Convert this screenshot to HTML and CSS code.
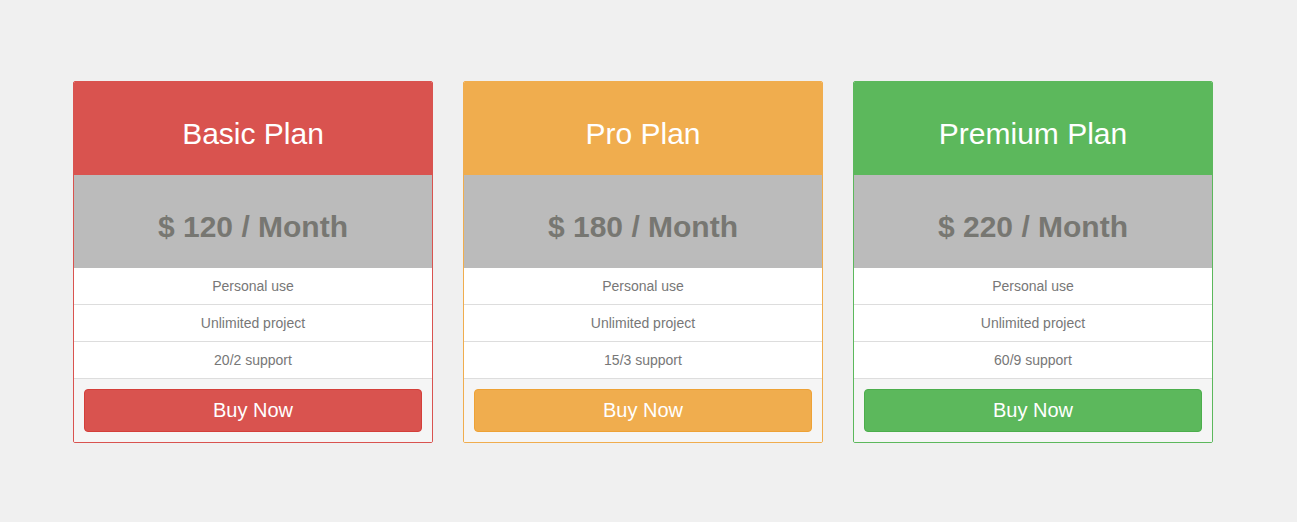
FILE: index.html
```html
<!DOCTYPE html>
<html lang="en">
<head>
<meta charset="utf-8">
<title>Pricing</title>
<link rel="stylesheet" href="styles.css">
</head>
<body>
<div class="pricing">
  <div class="plan plan-red">
    <div class="plan-head"><h2>Basic Plan</h2></div>
    <div class="plan-price"><h2>$ 120 / Month</h2></div>
    <ul class="plan-list">
      <li>Personal use</li>
      <li>Unlimited project</li>
      <li>20/2 support</li>
    </ul>
    <div class="plan-foot"><button class="btn">Buy Now</button></div>
  </div>
  <div class="plan plan-orange">
    <div class="plan-head"><h2>Pro Plan</h2></div>
    <div class="plan-price"><h2>$ 180 / Month</h2></div>
    <ul class="plan-list">
      <li>Personal use</li>
      <li>Unlimited project</li>
      <li>15/3 support</li>
    </ul>
    <div class="plan-foot"><button class="btn">Buy Now</button></div>
  </div>
  <div class="plan plan-green">
    <div class="plan-head"><h2>Premium Plan</h2></div>
    <div class="plan-price"><h2>$ 220 / Month</h2></div>
    <ul class="plan-list">
      <li>Personal use</li>
      <li>Unlimited project</li>
      <li>60/9 support</li>
    </ul>
    <div class="plan-foot"><button class="btn">Buy Now</button></div>
  </div>
</div>
</body>
</html>
```
FILE: styles.css
```css
* { box-sizing: border-box; }
html, body { margin: 0; padding: 0; }
body {
  background: #f0f0f0;
  font-family: "Liberation Sans", Arial, Helvetica, sans-serif;
  font-size: 14px;
  line-height: 20px;
  color: #333;
}
.pricing {
  display: flex;
  gap: 30px;
  padding: 81px 0 0 73px;
}
.plan {
  width: 360px;
  border: 1px solid #d9534f;
  border-radius: 2px;
  background: #fff;
  overflow: hidden;
}
.plan h2 {
  margin: 0;
  font-size: 30px;
  line-height: 33px;
  text-align: center;
}
.plan-head {
  padding: 35px 15px 25px;
  color: #fff;
}
.plan-head h2 { font-weight: normal; }
.plan-price {
  background: #bbbbbb;
  padding: 35px 15px 25px;
  color: #777772;
}
.plan-price h2 { font-weight: bold; }
.plan-list {
  list-style: none;
  margin: 0;
  padding: 0;
}
.plan-list li {
  padding: 8px 15px;
  border-bottom: 1px solid #ddd;
  text-align: center;
  color: #777;
}
.plan-foot {
  background: #f5f5f5;
  padding: 10px;
}
.btn {
  display: block;
  width: 100%;
  height: 43px;
  padding: 8px 16px;
  font-family: inherit;
  font-size: 20px;
  line-height: 25px;
  color: #fff;
  border: 1px solid;
  border-radius: 4px;
  cursor: pointer;
}
.plan-red { border-color: #d9534f; }
.plan-red .plan-head { background: #d9534f; }
.plan-red .btn { background: #d9534f; border-color: #d43f3a; }
.plan-orange { border-color: #f0ad4e; }
.plan-orange .plan-head { background: #f0ad4e; }
.plan-orange .btn { background: #f0ad4e; border-color: #eea236; }
.plan-green { border-color: #5cb85c; }
.plan-green .plan-head { background: #5cb85c; }
.plan-green .btn { background: #5cb85c; border-color: #4cae4c; }
```
